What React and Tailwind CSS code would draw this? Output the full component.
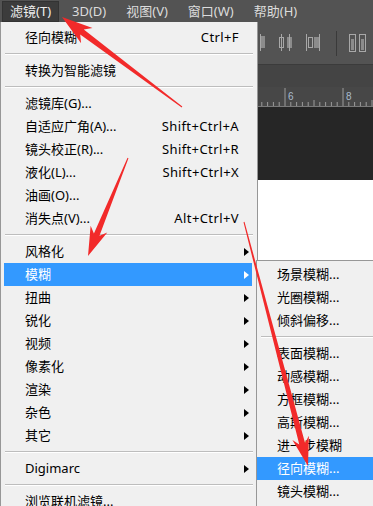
import React from 'react';

const mainItems = [
  { label: '径向模糊', keys: 'Ctrl+F' },
  'sep',
  { label: '转换为智能滤镜' },
  'sep',
  { label: '滤镜库(G)...' },
  { label: '自适应广角(A)...', keys: 'Shift+Ctrl+A' },
  { label: '镜头校正(R)...', keys: 'Shift+Ctrl+R' },
  { label: '液化(L)...', keys: 'Shift+Ctrl+X' },
  { label: '油画(O)...' },
  { label: '消失点(V)...', keys: 'Alt+Ctrl+V' },
  'sep',
  { label: '风格化', sub: true },
  { label: '模糊', sub: true, active: true },
  { label: '扭曲', sub: true },
  { label: '锐化', sub: true },
  { label: '视频', sub: true },
  { label: '像素化', sub: true },
  { label: '渲染', sub: true },
  { label: '杂色', sub: true },
  { label: '其它', sub: true },
  'sep',
  { label: 'Digimarc', sub: true },
  'sep',
  { label: '浏览联机滤镜...' },
];

const blurItems = [
  { label: '场景模糊...' },
  { label: '光圈模糊...' },
  { label: '倾斜偏移...' },
  'sep',
  { label: '表面模糊...' },
  { label: '动感模糊...' },
  { label: '方框模糊...' },
  { label: '高斯模糊...' },
  { label: '进一步模糊' },
  { label: '径向模糊...', active: true },
  { label: '镜头模糊...' },
];

const menuBar = ['滤镜(T)', '3D(D)', '视图(V)', '窗口(W)', '帮助(H)'];

function SubArrow({ white }) {
  return (
    <svg width="5" height="8" viewBox="0 0 5 8" className="shrink-0">
      <polygon points="0,0 5,4 0,8" fill={white ? '#ffffff' : '#000000'} />
    </svg>
  );
}

function Separator({ inset = 'mx-[4px]' }) {
  return (
    <div className="h-[10px] flex flex-col justify-center">
      <div className={`${inset} h-px bg-[#bdbdbd]`} />
      <div className={`${inset} h-px bg-white`} />
    </div>
  );
}

// tapered red annotation arrow, like a screenshot tool draws
function arrowPoints(x1, y1, x2, y2, head, width, neck) {
  const dx = x2 - x1;
  const dy = y2 - y1;
  const len = Math.hypot(dx, dy);
  const ux = dx / len;
  const uy = dy / len;
  const nx = -uy;
  const ny = ux;
  const bx = x2 - ux * head;
  const by = y2 - uy * head;
  const pts = [
    [x1 + nx * 0.5, y1 + ny * 0.5],
    [bx + ux * 3 + nx * neck / 2, by + uy * 3 + ny * neck / 2],
    [bx - ux * 3 + nx * width / 2, by - uy * 3 + ny * width / 2],
    [x2, y2],
    [bx - ux * 3 - nx * width / 2, by - uy * 3 - ny * width / 2],
    [bx + ux * 3 - nx * neck / 2, by + uy * 3 - ny * neck / 2],
    [x1 - nx * 0.5, y1 - ny * 0.5],
  ];
  return pts.map((p) => p.join(',')).join(' ');
}

function Ruler() {
  const ticks = [];
  for (let i = 0; i < 40; i++) {
    const x = 227 + i * 5.8;
    const major = i % 10 === 0;
    const mid = i % 10 === 5;
    const h = major ? 18 : mid ? 6 : 4;
    ticks.push(<line key={i} x1={x} x2={x} y1={19 - h} y2={19} stroke="#9b9b9b" strokeWidth="1" />);
  }
  return (
    <svg width="373" height="20" className="block bg-[#474747]">
      {ticks}
      <text x="288" y="13" fontSize="10" fill="#a9bccd" fontFamily="Liberation Sans, sans-serif">6</text>
      <text x="346" y="13" fontSize="10" fill="#a9bccd" fontFamily="Liberation Sans, sans-serif">8</text>
      <line x1="0" x2="373" y1="19.5" y2="19.5" stroke="#7a7a7a" />
    </svg>
  );
}

export default function App() {
  return (
    <div className="relative w-[373px] h-[506px] overflow-hidden bg-[#262626] font-['Noto_Sans','Noto_Sans_CJK_SC',sans-serif] leading-none">
      {/* menu bar */}
      <div className="h-[22px] bg-[#535353] flex items-center pl-[2px] gap-[6px] text-[13px] text-[#dcdcdc]">
        {menuBar.map((m, i) => (
          <div
            key={m}
            className={`h-[21px] px-[7px] flex items-center ${i === 0 ? 'bg-[#3c3c3c] border border-[#333333] text-[#eeeeee]' : ''}`}
          >
            {m}
          </div>
        ))}
      </div>

      {/* options bar */}
      <div className="h-[43px] bg-[#535353] border-b border-[#3b3b3b] flex items-center justify-end pr-[6px]">
        <svg width="12" height="20" viewBox="0 0 12 20" className="mr-[13px]">
          <rect x="1" y="3" width="4" height="12" fill="#8c8c8c" />
          <line x1="7.5" y1="1" x2="7.5" y2="18" stroke="#a8a8a8" />
          <rect x="8" y="3" width="4" height="12" fill="#8c8c8c" />
        </svg>
        <svg width="15" height="20" viewBox="0 0 15 20" className="mr-[12px]">
          <rect x="1.5" y="4.5" width="4" height="10" fill="none" stroke="#a8a8a8" />
          <line x1="3.5" y1="1" x2="3.5" y2="18" stroke="#a8a8a8" />
          <rect x="9" y="4" width="5" height="11" fill="#8c8c8c" />
          <line x1="11.5" y1="1" x2="11.5" y2="18" stroke="#a8a8a8" />
        </svg>
        <svg width="16" height="20" viewBox="0 0 16 20" className="mr-[15px]">
          <line x1="1.5" y1="1" x2="1.5" y2="18" stroke="#a8a8a8" />
          <rect x="3.5" y="4.5" width="4" height="10" fill="none" stroke="#a8a8a8" />
          <rect x="9" y="4" width="5" height="11" fill="#8c8c8c" />
          <line x1="14.5" y1="1" x2="14.5" y2="18" stroke="#a8a8a8" />
        </svg>
        <div className="w-px h-[25px] bg-[#3a3a3a] mr-[11px]" />
        <svg width="19" height="20" viewBox="0 0 19 20">
          <rect x="1.5" y="1.5" width="6" height="17" fill="none" stroke="#a8a8a8" />
          <rect x="3" y="6" width="3" height="11" fill="#8c8c8c" />
          <rect x="11.5" y="1.5" width="6" height="17" fill="none" stroke="#a8a8a8" />
          <rect x="13" y="6" width="3" height="11" fill="#8c8c8c" />
        </svg>
      </div>

      {/* tab strip + ruler */}
      <div className="h-[22px] bg-[#444444]" />
      <Ruler />
      <div className="h-[73px] bg-[#262626]" />
      <div className="h-[330px] bg-white" />

      {/* filter menu */}
      <div className="absolute left-0 top-[22px] w-[258px] h-[484px] bg-[#f0f0f0] border-x border-[#979797] pt-[4px] text-[13px] text-black">
        {mainItems.map((it, i) =>
          it === 'sep' ? (
            <Separator key={i} />
          ) : (
            <div
              key={i}
              className={`h-[23px] ml-[3px] mr-[5px] pl-[21px] flex items-center justify-between ${
                it.sub ? 'pr-[3px]' : 'pr-[13px]'
              } ${it.active ? 'bg-[#3399ff] text-white' : ''}`}
            >
              <span>{it.label}</span>
              {it.keys && <span className="tracking-[0.4px]">{it.keys}</span>}
              {it.sub && <SubArrow white={it.active} />}
            </div>
          )
        )}
      </div>

      {/* blur submenu */}
      <div className="absolute left-[256px] top-[260px] w-[130px] h-[260px] bg-[#f0f0f0] border-l border-t border-[#979797] pt-[2px] text-[13px] text-black">
        {blurItems.map((it, i) =>
          it === 'sep' ? (
            <Separator key={i} inset="ml-[4px]" />
          ) : (
            <div
              key={i}
              className={`h-[23px] pl-[20px] flex items-center ${it.active ? 'bg-[#3399ff] text-white' : ''}`}
            >
              {it.label}
            </div>
          )
        )}
      </div>

      {/* red annotation arrows */}
      <svg className="absolute inset-0 pointer-events-none" width="373" height="506" viewBox="0 0 373 506">
        <polygon points={arrowPoints(182, 107, 62, 17, 28, 19, 6)} fill="#f22a2a" />
        <polygon points={arrowPoints(128, 158, 88, 256, 26, 18, 6)} fill="#f22a2a" />
        <polygon points={arrowPoints(244, 222, 308, 466, 26, 17, 6)} fill="#f22a2a" />
      </svg>
    </div>
  );
}
